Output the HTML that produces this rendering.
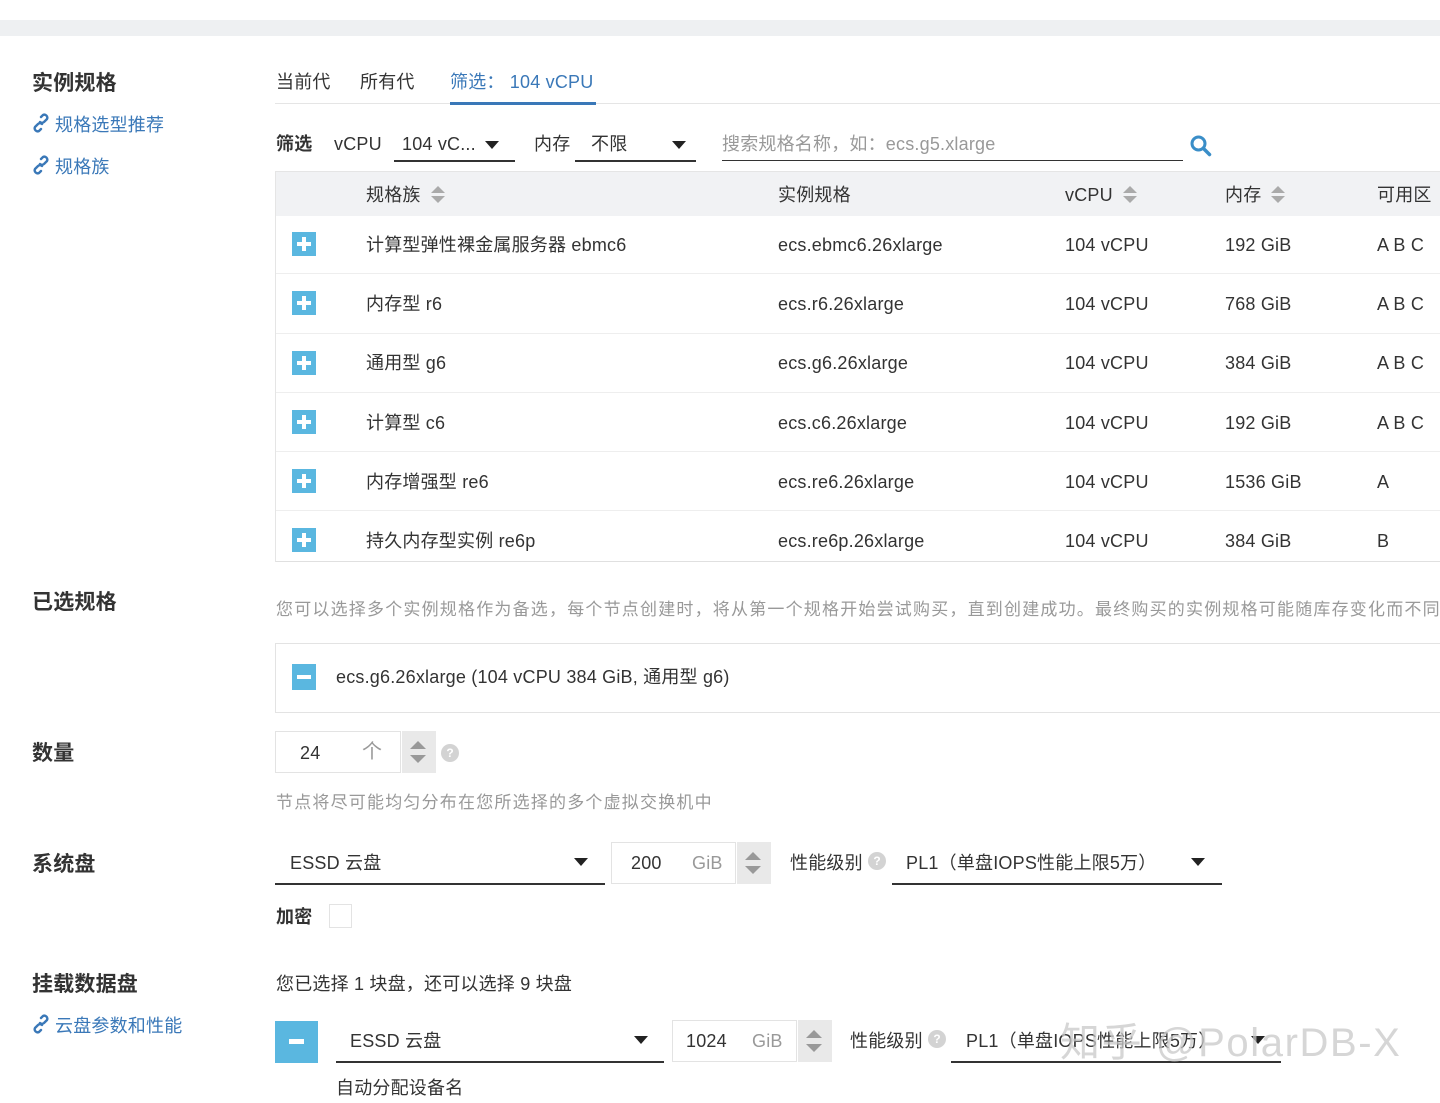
<!DOCTYPE html>
<html><head><meta charset="utf-8">
<style>
*{margin:0;padding:0;box-sizing:border-box}
body{width:1440px;height:1103px;overflow:hidden;background:#fff;font-family:"Liberation Sans","Noto Sans CJK SC",sans-serif;color:#333;font-size:18px;position:relative}
.a{position:absolute;white-space:nowrap;line-height:1;letter-spacing:0.2px}
div.a{margin-top:1px}
.lbl{font-size:21px;font-weight:bold;color:#333}
.blue{color:#3a78b8}
.gray{color:#999}
.gl{letter-spacing:1.2px}
.plus{position:absolute;left:292px;width:24px;height:24px;background:#5ab7e0}
.plus:before{content:"";position:absolute;left:5px;top:10px;width:14px;height:4px;background:#fff}
.plus:after{content:"";position:absolute;left:10px;top:5px;width:4px;height:14px;background:#fff}
.tri{position:absolute;width:0;height:0;border-left:7px solid transparent;border-right:7px solid transparent;border-top:8px solid #222}
.line{position:absolute;height:2px;background:#333}
.sort{position:absolute;width:14px;height:18px}
.sort:before{content:"";position:absolute;left:0;top:0;border-left:7px solid transparent;border-right:7px solid transparent;border-bottom:7px solid #aaa}
.sort:after{content:"";position:absolute;left:0;top:10px;border-left:7px solid transparent;border-right:7px solid transparent;border-top:7px solid #aaa}
.box{position:absolute;border:1px solid #e3e3e3;background:#fff}
.spin{position:absolute;background:#e9e9e9}
.spin i{position:absolute;left:8px;width:0;height:0;border-left:8px solid transparent;border-right:8px solid transparent}
.q{position:absolute;width:18px;height:18px;border-radius:50%;background:#d3d3d3;color:#fff;font-size:12px;font-weight:bold;text-align:center;line-height:18px}
</style></head><body>
<div style="position:absolute;left:0;top:20px;width:1440px;height:16px;background:#eef0f2"></div>

<div class="a lbl" style="left:32px;top:72px">实例规格</div>
<svg class="a" style="left:32px;top:113px" width="18" height="20" viewBox="0 0 18 20"><g fill="none" stroke="#3a78b8" stroke-width="2.4" stroke-linecap="round"><path d="M9 4l2-2a3 3 0 014 4l-3 3a3 3 0 01-4 0"/><path d="M9 16l-2 2a3 3 0 01-4-4l3-3a3 3 0 014 0"/></g></svg>
<div class="a blue" style="left:55px;top:115px">规格选型推荐</div>
<svg class="a" style="left:32px;top:155px" width="18" height="20" viewBox="0 0 18 20"><g fill="none" stroke="#3a78b8" stroke-width="2.4" stroke-linecap="round"><path d="M9 4l2-2a3 3 0 014 4l-3 3a3 3 0 01-4 0"/><path d="M9 16l-2 2a3 3 0 01-4-4l3-3a3 3 0 014 0"/></g></svg>
<div class="a blue" style="left:55px;top:157px">规格族</div>

<div class="a" style="left:276px;top:72px">当前代</div>
<div class="a" style="left:360px;top:72px">所有代</div>
<div class="a blue" style="left:450px;top:72px">筛选：&nbsp;104 vCPU</div>
<div style="position:absolute;left:275px;top:103px;width:1165px;height:1px;background:#e5e5e5"></div>
<div style="position:absolute;left:450px;top:102px;width:146px;height:3px;background:#3a78b8"></div>

<div class="a" style="left:276px;top:134px;font-weight:bold">筛选</div>
<div class="a" style="left:334px;top:134px">vCPU</div>
<div class="a" style="left:402px;top:134px">104 vC...</div>
<div class="tri" style="left:485px;top:141px"></div>
<div class="line" style="left:394px;top:160px;width:121px"></div>
<div class="a" style="left:534px;top:134px">内存</div>
<div class="a" style="left:591px;top:134px">不限</div>
<div class="tri" style="left:672px;top:141px"></div>
<div class="line" style="left:575px;top:160px;width:121px"></div>
<div class="a gray" style="left:722px;top:134px">搜索规格名称，如：ecs.g5.xlarge</div>
<div style="position:absolute;left:722px;top:160px;width:461px;height:1px;background:#333"></div>
<svg class="a" style="left:1189px;top:134px" width="24" height="24" viewBox="0 0 24 24"><circle cx="9.5" cy="9.5" r="6.5" fill="none" stroke="#3a8ec8" stroke-width="3"/><path d="M14.5 14.5l6 6" stroke="#3a8ec8" stroke-width="3.5" stroke-linecap="round"/></svg>

<div style="position:absolute;left:275px;top:171px;width:1165px;height:391px;border-left:1px solid #e5e5e5;border-bottom:1px solid #e0e0e0;border-top:1px solid #e5e5e5"></div>
<div style="position:absolute;left:276px;top:172px;width:1164px;height:44px;background:#f1f2f4"></div>
<div class="a" style="left:366px;top:185px">规格族</div><div class="sort" style="left:431px;top:186px"></div>
<div class="a" style="left:778px;top:185px">实例规格</div>
<div class="a" style="left:1065px;top:185px">vCPU</div><div class="sort" style="left:1123px;top:186px"></div>
<div class="a" style="left:1225px;top:185px">内存</div><div class="sort" style="left:1271px;top:186px"></div>
<div class="a" style="left:1377px;top:185px">可用区</div>

<div class="plus" style="top:232px"></div>
<div class="a" style="left:366px;top:235px">计算型弹性裸金属服务器 ebmc6</div><div class="a" style="left:778px;top:235px">ecs.ebmc6.26xlarge</div><div class="a" style="left:1065px;top:235px">104 vCPU</div><div class="a" style="left:1225px;top:235px">192 GiB</div><div class="a" style="left:1377px;top:235px">A B C</div>
<div style="position:absolute;left:276px;top:273px;width:1164px;height:1px;background:#eee"></div>
<div class="plus" style="top:291px"></div>
<div class="a" style="left:366px;top:294px">内存型 r6</div><div class="a" style="left:778px;top:294px">ecs.r6.26xlarge</div><div class="a" style="left:1065px;top:294px">104 vCPU</div><div class="a" style="left:1225px;top:294px">768 GiB</div><div class="a" style="left:1377px;top:294px">A B C</div>
<div style="position:absolute;left:276px;top:333px;width:1164px;height:1px;background:#eee"></div>
<div class="plus" style="top:351px"></div>
<div class="a" style="left:366px;top:353px">通用型 g6</div><div class="a" style="left:778px;top:353px">ecs.g6.26xlarge</div><div class="a" style="left:1065px;top:353px">104 vCPU</div><div class="a" style="left:1225px;top:353px">384 GiB</div><div class="a" style="left:1377px;top:353px">A B C</div>
<div style="position:absolute;left:276px;top:392px;width:1164px;height:1px;background:#eee"></div>
<div class="plus" style="top:410px"></div>
<div class="a" style="left:366px;top:413px">计算型 c6</div><div class="a" style="left:778px;top:413px">ecs.c6.26xlarge</div><div class="a" style="left:1065px;top:413px">104 vCPU</div><div class="a" style="left:1225px;top:413px">192 GiB</div><div class="a" style="left:1377px;top:413px">A B C</div>
<div style="position:absolute;left:276px;top:451px;width:1164px;height:1px;background:#eee"></div>
<div class="plus" style="top:469px"></div>
<div class="a" style="left:366px;top:472px">内存增强型 re6</div><div class="a" style="left:778px;top:472px">ecs.re6.26xlarge</div><div class="a" style="left:1065px;top:472px">104 vCPU</div><div class="a" style="left:1225px;top:472px">1536 GiB</div><div class="a" style="left:1377px;top:472px">A</div>
<div style="position:absolute;left:276px;top:510px;width:1164px;height:1px;background:#eee"></div>
<div class="plus" style="top:528px"></div>
<div class="a" style="left:366px;top:531px">持久内存型实例 re6p</div><div class="a" style="left:778px;top:531px">ecs.re6p.26xlarge</div><div class="a" style="left:1065px;top:531px">104 vCPU</div><div class="a" style="left:1225px;top:531px">384 GiB</div><div class="a" style="left:1377px;top:531px">B</div>

<div class="a lbl" style="left:32px;top:591px">已选规格</div>
<div class="a gray gl" style="left:276px;top:600px;font-size:17px">您可以选择多个实例规格作为备选，每个节点创建时，将从第一个规格开始尝试购买，直到创建成功。最终购买的实例规格可能随库存变化而不同</div>
<div class="box" style="left:275px;top:643px;width:1180px;height:70px"></div>
<div style="position:absolute;left:292px;top:664px;width:24px;height:26px;background:#5ab7e0"></div>
<div style="position:absolute;left:297px;top:675px;width:14px;height:4px;background:#fff"></div>
<div class="a" style="left:336px;top:667px">ecs.g6.26xlarge (104 vCPU 384 GiB, 通用型 g6)</div>

<div class="a lbl" style="left:32px;top:742px">数量</div>
<div class="box" style="left:275px;top:731px;width:126px;height:42px"></div>
<div class="a" style="left:300px;top:743px">24</div>
<div class="a gray" style="left:362px;top:741px;font-size:20px">个</div>
<div class="spin" style="left:402px;top:731px;width:34px;height:42px"><i style="top:10px;border-bottom:8px solid #999"></i><i style="top:24px;border-top:8px solid #999"></i></div>
<div class="q" style="left:441px;top:744px">?</div>
<div class="a gray gl" style="left:276px;top:793px;font-size:17px">节点将尽可能均匀分布在您所选择的多个虚拟交换机中</div>

<div class="a lbl" style="left:32px;top:853px">系统盘</div>
<div class="a" style="left:290px;top:853px">ESSD 云盘</div>
<div class="tri" style="left:574px;top:858px"></div>
<div class="line" style="left:275px;top:883px;width:330px"></div>
<div class="box" style="left:611px;top:842px;width:125px;height:42px"></div>
<div class="a" style="left:631px;top:853px">200</div>
<div class="a gray" style="left:692px;top:853px">GiB</div>
<div class="spin" style="left:737px;top:842px;width:34px;height:42px"><i style="top:10px;border-bottom:8px solid #999"></i><i style="top:24px;border-top:8px solid #999"></i></div>
<div class="a" style="left:790px;top:853px">性能级别</div>
<div class="q" style="left:868px;top:852px">?</div>
<div class="a" style="left:906px;top:853px">PL1（单盘IOPS性能上限5万）</div>
<div class="tri" style="left:1191px;top:858px"></div>
<div class="line" style="left:892px;top:883px;width:330px"></div>

<div class="a" style="left:276px;top:907px;font-weight:bold">加密</div>
<div class="box" style="left:329px;top:904px;width:23px;height:24px"></div>

<div class="a lbl" style="left:32px;top:973px">挂载数据盘</div>
<svg class="a" style="left:32px;top:1014px" width="18" height="20" viewBox="0 0 18 20"><g fill="none" stroke="#3a78b8" stroke-width="2.4" stroke-linecap="round"><path d="M9 4l2-2a3 3 0 014 4l-3 3a3 3 0 01-4 0"/><path d="M9 16l-2 2a3 3 0 01-4-4l3-3a3 3 0 014 0"/></g></svg>
<div class="a blue" style="left:55px;top:1016px">云盘参数和性能</div>
<div class="a" style="left:276px;top:974px">您已选择 1 块盘，还可以选择 9 块盘</div>

<div style="position:absolute;left:275px;top:1021px;width:43px;height:42px;background:#5ab7e0"></div>
<div style="position:absolute;left:289px;top:1039px;width:15px;height:5px;background:#fff"></div>
<div class="a" style="left:350px;top:1031px">ESSD 云盘</div>
<div class="tri" style="left:634px;top:1036px"></div>
<div class="line" style="left:336px;top:1061px;width:328px"></div>
<div class="box" style="left:672px;top:1020px;width:125px;height:42px"></div>
<div class="a" style="left:686px;top:1031px">1024</div>
<div class="a gray" style="left:752px;top:1031px">GiB</div>
<div class="spin" style="left:798px;top:1020px;width:34px;height:42px"><i style="top:10px;border-bottom:8px solid #999"></i><i style="top:24px;border-top:8px solid #999"></i></div>
<div class="a" style="left:850px;top:1031px">性能级别</div>
<div class="q" style="left:928px;top:1030px">?</div>
<div class="a" style="left:966px;top:1031px">PL1（单盘IOPS性能上限5万）</div>
<div class="tri" style="left:1251px;top:1036px"></div>
<div class="line" style="left:951px;top:1061px;width:330px"></div>
<div class="a" style="left:336px;top:1078px">自动分配设备名</div>

<div class="a" style="left:1060px;top:1022px;font-size:40px;letter-spacing:1.6px;color:rgba(200,200,200,0.75)">知乎 @PolarDB-X</div>
</body></html>
